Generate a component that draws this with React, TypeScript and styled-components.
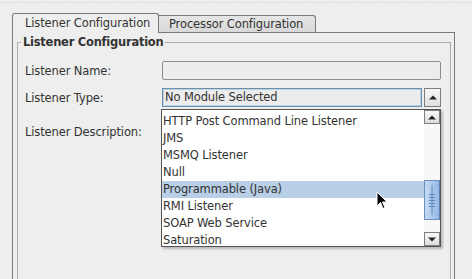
import React from "react";
import styled, { createGlobalStyle } from "styled-components";

const GlobalStyle = createGlobalStyle`
  html, body { margin: 0; padding: 0; background: #eeeeee; }
  body { font-family: "DejaVu Sans", "Liberation Sans", sans-serif; font-size: 11.5px; letter-spacing: -0.12px; color: #333333; }
  * { box-sizing: border-box; }
`;

const Page = styled.div`
  position: relative;
  width: 472px;
  height: 279px;
  overflow: hidden;
  background: #eeeeee;
`;

const DotStrip = styled.div`
  height: 5px;
  background: linear-gradient(to right, #c6c6c6 1px, transparent 1px) 0 2px / 3px 1px repeat-x;
`;

const TabBar = styled.div`
  position: relative;
  z-index: 1;
  display: flex;
  align-items: flex-start;
  height: 19px;
  margin-top: 8px;
  padding-left: 12px;
`;

const Tab = styled.div<{ $active?: boolean }>`
  height: ${(p) => (p.$active ? "20px" : "17px")};
  margin-top: ${(p) => (p.$active ? "0" : "2px")};
  width: ${(p) => (p.$active ? "147px" : "157px")};
  padding-left: ${(p) => (p.$active ? "12px" : "10px")};
  border: 1px solid #7a7a7a;
  border-bottom: none;
  border-left: ${(p) => (p.$active ? "1px solid #7a7a7a" : "none")};
  border-radius: ${(p) => (p.$active ? "3px 3px 0 0" : "0 3px 0 0")};
  background: ${(p) => (p.$active ? "#eeeeee" : "linear-gradient(#e6e6e6, #d9d9d9)")};
  line-height: ${(p) => (p.$active ? "19px" : "16px")};
  white-space: nowrap;
`;

const Panel = styled.div`
  margin-left: 12px;
  width: 443px;
  height: 260px;
  border: 1px solid #7a7a7a;
  border-bottom: none;
  padding: 2px 3px 0 4px;
`;

const GroupBox = styled.fieldset`
  margin: 0;
  width: 434px;
  height: 300px;
  border: 1px solid #adadad;
  padding: 0 8px 0 7px;
`;

const GroupTitle = styled.legend`
  margin-left: -4px;
  padding: 0 2px;
  font-weight: bold;
  font-size: 11.5px;
  letter-spacing: -0.25px;
  line-height: 15px;
  color: #333333;
`;

const Form = styled.div`
  display: grid;
  grid-template-columns: 137px 279px;
  row-gap: 8px;
  align-items: center;
  margin-top: 11px;
`;

const Label = styled.div`
  white-space: nowrap;
`;

const TextField = styled.div`
  height: 19px;
  border: 1px solid #8c8c8c;
  border-radius: 2px;
  background: #ededed;
`;

const Combo = styled.div`
  position: relative;
  display: flex;
  gap: 2px;
  height: 19px;
`;

const ComboField = styled.div`
  flex: 1;
  border: 1px solid #6f8ea6;
  box-shadow: inset 0 0 0 1px #b7d4e8;
  background: #ececec;
  padding-left: 2px;
  line-height: 17px;
  white-space: nowrap;
`;

const ArrowButton = styled.div<{ $h?: number }>`
  width: ${(p) => (p.$h ? "16px" : "17px")};
  height: ${(p) => (p.$h ? `${p.$h}px` : "19px")};
  border: 1px solid #7e7e7e;
  background: linear-gradient(#f7f7f7, #dedede);
  display: flex;
  align-items: center;
  justify-content: center;
`;

const DescriptionArea = styled.div`
  height: 34px;
  border: 1px solid #8c8c8c;
  background: #ffffff;
`;

const Popup = styled.div`
  position: absolute;
  z-index: 2;
  top: 21px;
  left: -1px;
  width: 280px;
  height: 138px;
  border: 1px solid #555555;
  background: #ffffff;
  box-shadow: 2px 2px 2px rgba(0, 0, 0, 0.22);
  display: flex;
`;

const ListViewport = styled.div`
  flex: 1;
  overflow: hidden;
  padding-top: 3px;
`;

const Item = styled.div<{ $selected?: boolean }>`
  height: 17px;
  line-height: 17px;
  padding-left: 1px;
  white-space: nowrap;
  background: ${(p) => (p.$selected ? "#b8cfe5" : "transparent")};
`;

const ScrollBar = styled.div`
  width: 16px;
  display: flex;
  flex-direction: column;
`;

const Track = styled.div`
  flex: 1;
  background: #f8f8f8;
`;

const Thumb = styled.div`
  height: 40px;
  border: 1px solid #6d8fbd;
  border-right-color: #5a7fb0;
  background: linear-gradient(to right, #c6dcf5, #a8c7ec 60%, #94b7e2);
  display: flex;
  align-items: center;
  justify-content: center;
`;

const Cursor = styled.svg`
  position: absolute;
  left: 376px;
  top: 191px;
  z-index: 5;
`;

const Triangle: React.FC<{ up?: boolean }> = ({ up }) => (
  <svg width="8" height="5" viewBox="0 0 8 5">
    {up ? <path d="M0 4.5 L4 0.5 L8 4.5 Z" fill="#222" /> : <path d="M0 0.5 L8 0.5 L4 4.5 Z" fill="#222" />}
  </svg>
);

const items = [
  "HTTP Post Command Line Listener",
  "JMS",
  "MSMQ Listener",
  "Null",
  "Programmable (Java)",
  "RMI Listener",
  "SOAP Web Service",
  "Saturation",
];

export default function App() {
  const thumbOffset = 56;
  return (
    <Page>
      <GlobalStyle />
      <DotStrip />
      <TabBar>
        <Tab $active>Listener Configuration</Tab>
        <Tab>Processor Configuration</Tab>
      </TabBar>
      <Panel>
        <GroupBox>
          <GroupTitle>Listener Configuration</GroupTitle>
          <Form>
            <Label>Listener Name:</Label>
            <TextField />
            <Label>Listener Type:</Label>
            <Combo>
              <ComboField>No Module Selected</ComboField>
              <ArrowButton>
                <Triangle up />
              </ArrowButton>
              <Popup>
                <ListViewport>
                  {items.map((it) => (
                    <Item key={it} $selected={it === "Programmable (Java)"}>
                      {it}
                    </Item>
                  ))}
                </ListViewport>
                <ScrollBar>
                  <ArrowButton $h={14}>
                    <Triangle up />
                  </ArrowButton>
                  <Track>
                    <Thumb style={{ marginTop: thumbOffset }}>
                      <svg width="8" height="30" viewBox="0 0 8 30">
                        <line x1="4" y1="0" x2="4" y2="30" stroke="#5f86b8" strokeWidth="1" />
                        {[9, 12, 15, 18, 21].map((y) => (
                          <line key={y} x1="1" y1={y + 0.5} x2="7" y2={y + 0.5} stroke="#5f86b8" strokeWidth="1" />
                        ))}
                      </svg>
                    </Thumb>
                  </Track>
                  <ArrowButton $h={14}>
                    <Triangle />
                  </ArrowButton>
                </ScrollBar>
              </Popup>
            </Combo>
            <Label>Listener Description:</Label>
            <DescriptionArea />
          </Form>
        </GroupBox>
      </Panel>
      <Cursor width="13" height="20" viewBox="0 0 13 20">
        <path d="M1 1 L1 15 L4.5 11.5 L7 17.5 L9 16.5 L6.5 11 L11 11 Z" fill="#000" stroke="#fff" strokeWidth="1" strokeLinejoin="round" />
      </Cursor>
    </Page>
  );
}
